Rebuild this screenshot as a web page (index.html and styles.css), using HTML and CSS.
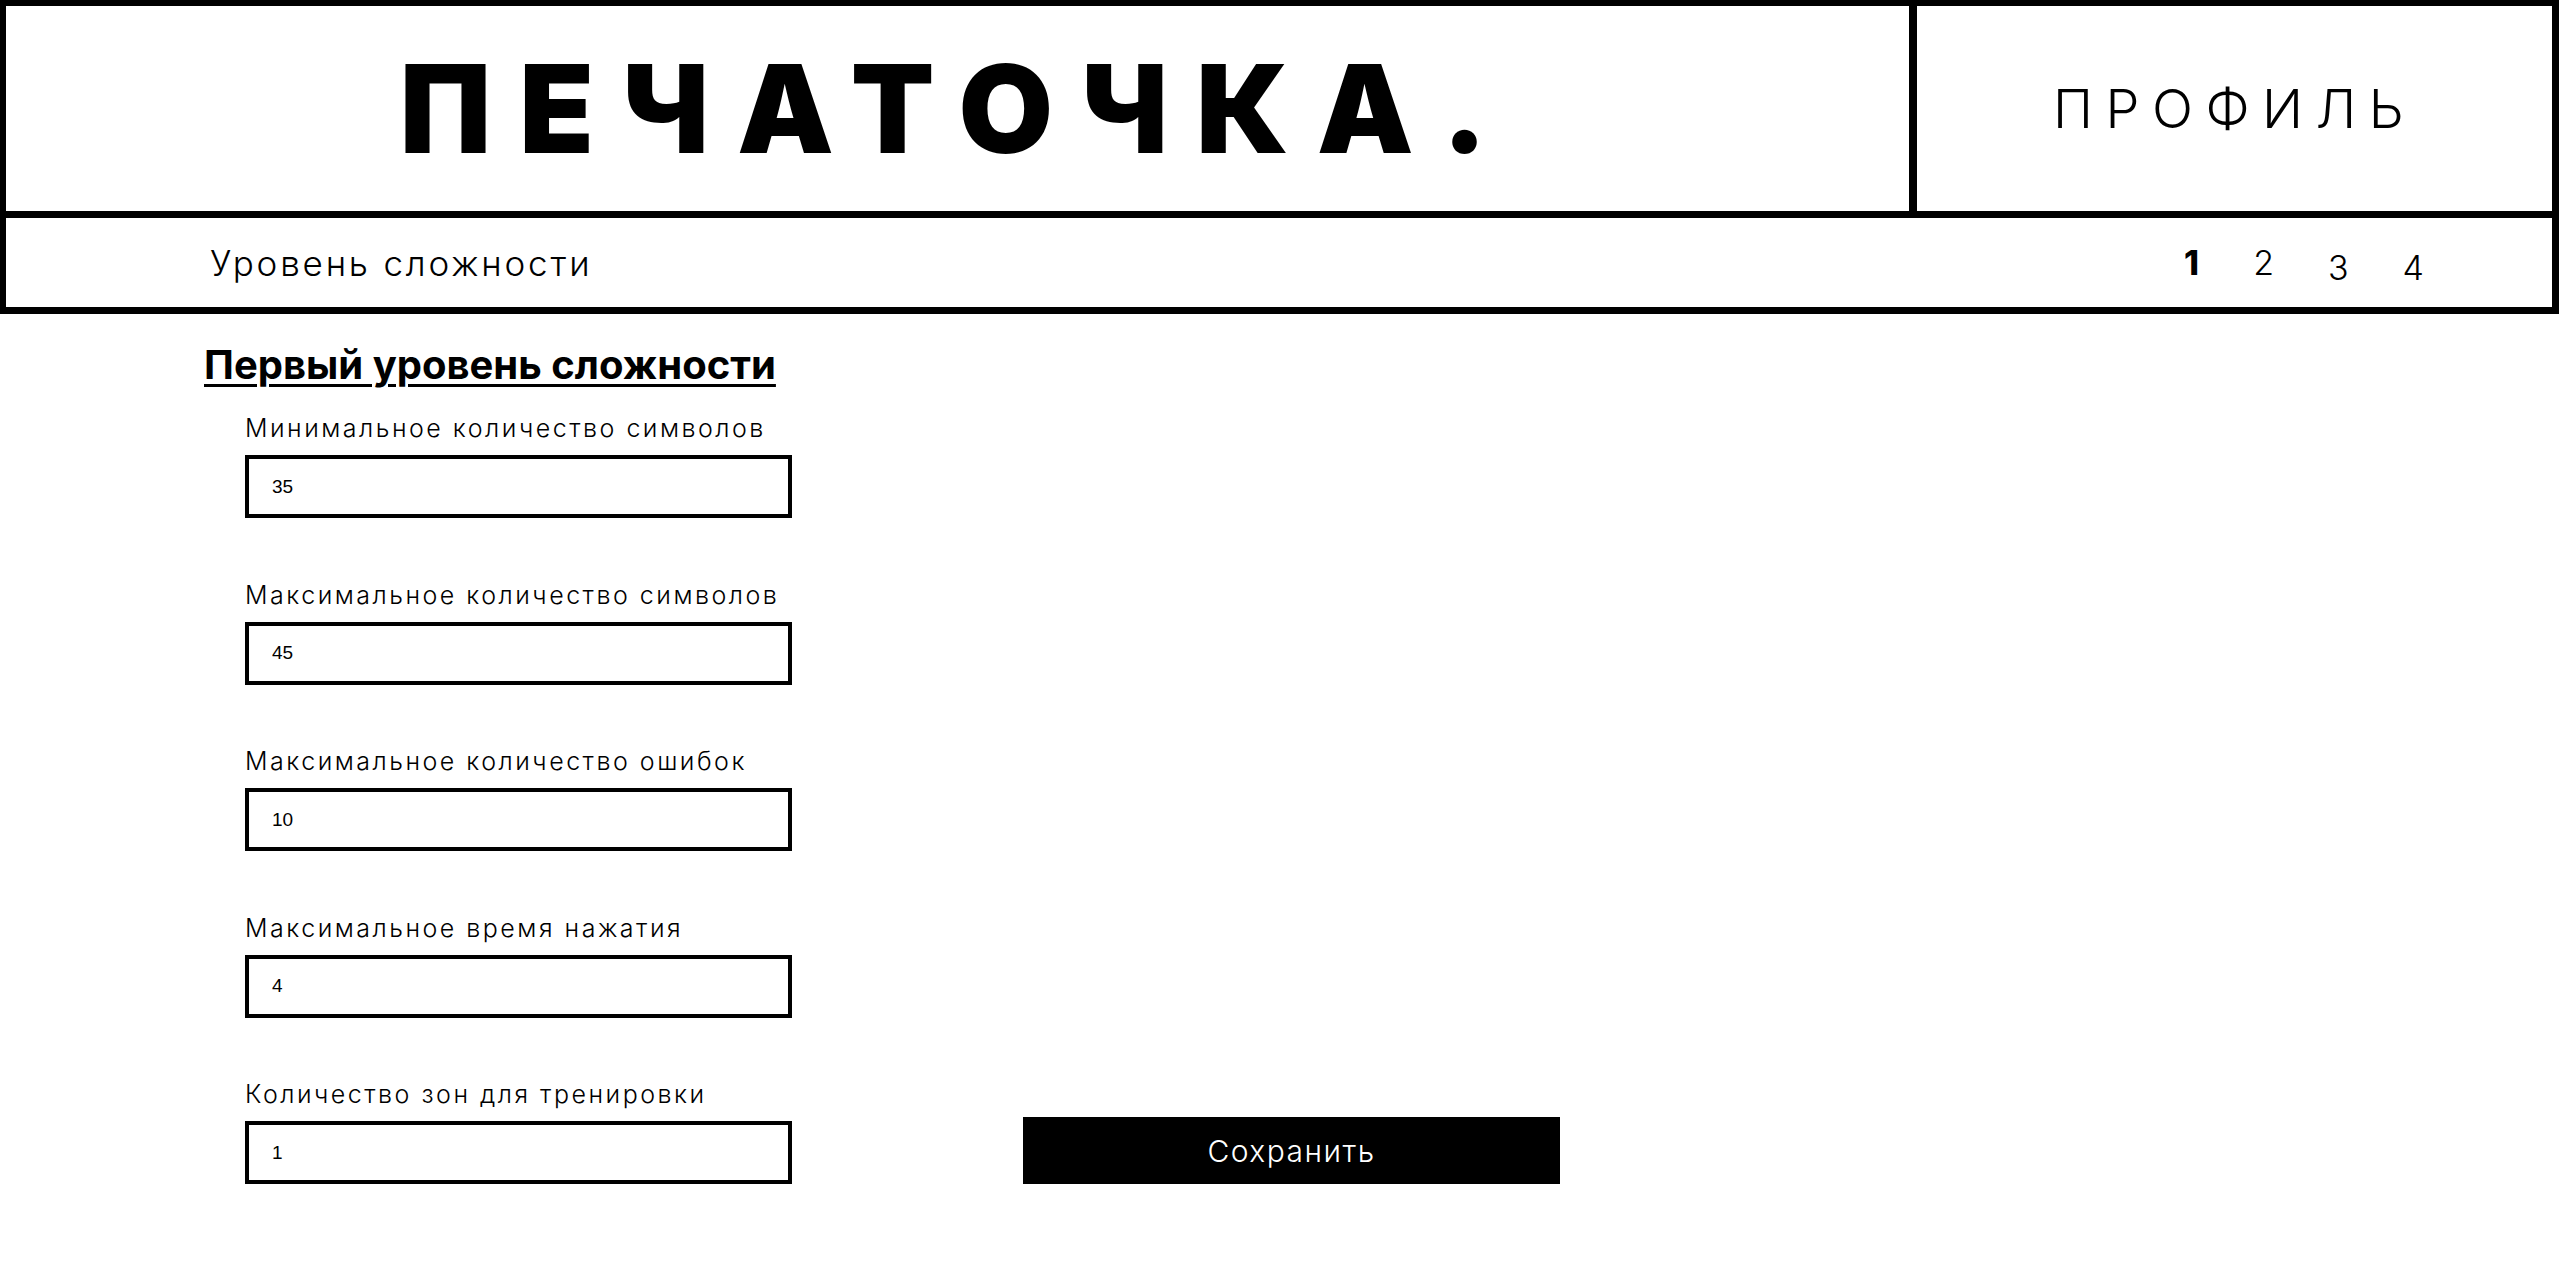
FILE: index.html
```html
<!DOCTYPE html>
<html lang="ru">
<head>
<meta charset="utf-8">
<title>Печаточка — уровень сложности</title>
<link rel="stylesheet" href="styles.css">
</head>
<body>
<header class="header">
  <div class="header-top">
    <div class="logo-cell"><h1 class="logo">ПЕЧАТОЧКА.</h1></div>
    <div class="profile-cell"><a class="profile" href="#">ПРОФИЛЬ</a></div>
  </div>
  <div class="header-bottom">
    <span class="section-title">Уровень сложности</span>
    <nav class="levels">
      <a class="level active" href="#">1</a>
      <a class="level" href="#">2</a>
      <a class="level low" href="#">3</a>
      <a class="level low" href="#">4</a>
    </nav>
  </div>
</header>
<main class="content">
  <h2 class="level-title">Первый уровень сложности</h2>
  <form class="form">
    <div class="field">
      <label class="field-label">Минимальное количество символов</label>
      <input class="field-input" type="text" value="35">
    </div>
    <div class="field">
      <label class="field-label">Максимальное количество символов</label>
      <input class="field-input" type="text" value="45">
    </div>
    <div class="field">
      <label class="field-label">Максимальное количество ошибок</label>
      <input class="field-input" type="text" value="10">
    </div>
    <div class="field">
      <label class="field-label">Максимальное время нажатия</label>
      <input class="field-input" type="text" value="4">
    </div>
    <div class="last-row">
      <div class="field">
        <label class="field-label">Количество зон для тренировки</label>
        <input class="field-input" type="text" value="1">
      </div>
      <button class="save" type="button">Сохранить</button>
    </div>
  </form>
</main>
</body>
</html>
```

FILE: styles.css
```css
* { box-sizing: border-box; }

body {
  margin: 0;
  font-family: Inter, "Open Sans", sans-serif;
  color: #000;
  background: #fff;
}

a { color: inherit; text-decoration: none; }

.header {
  border: 6px solid #000;
  border-right-width: 7px;
  border-bottom-width: 7px;
}

.header-top {
  display: flex;
  height: 212px;
  border-bottom: 7px solid #000;
}

.logo-cell {
  flex: 0 0 1911px;
  border-right: 8px solid #000;
  display: flex;
  align-items: center;
  justify-content: center;
}

.logo {
  margin: 0;
  font-family: Inter, sans-serif;
  font-weight: 900;
  font-size: 122px;
  line-height: 1;
  letter-spacing: 28px;
}

.profile-cell {
  flex: 1;
  display: flex;
  align-items: center;
  justify-content: center;
}

.profile {
  font-weight: 300;
  font-size: 54px;
  letter-spacing: 12.5px;
}

.header-bottom {
  height: 89px;
  display: flex;
  align-items: center;
  justify-content: space-between;
  padding: 0 128px 0 204px;
}

.section-title {
  font-weight: 300;
  font-size: 35px;
  letter-spacing: 2.8px;
}

.levels {
  display: flex;
  gap: 54px;
  font-size: 34px;
  font-weight: 300;
}

.level.active { font-weight: 800; }
.level.low { position: relative; top: 5px; }

.content {
  padding: 26px 0 40px 204px;
}

.level-title {
  margin: 0 0 24px;
  font-size: 40px;
  font-weight: 700;
  text-decoration: underline;
  text-decoration-thickness: 3px;
  text-underline-offset: 5px;
}

.form {
  padding-left: 41px;
  display: flex;
  flex-direction: column;
  gap: 61.5px;
}

.field {
  display: flex;
  flex-direction: column;
  gap: 12px;
}

.field-label {
  font-weight: 300;
  font-size: 25px;
  letter-spacing: 2.5px;
  line-height: 30px;
}

.field-input {
  width: 547px;
  height: 63px;
  border: 4px solid #000;
  padding: 0 0 0 23px;
  font-family: "Liberation Sans", Arial, sans-serif;
  font-size: 19px;
  color: #000;
  outline: none;
}

.last-row {
  display: flex;
  align-items: flex-end;
  gap: 231px;
}

.save {
  width: 537px;
  height: 67px;
  border: 0;
  background: #000;
  color: #fff;
  font-family: Inter, sans-serif;
  font-weight: 300;
  font-size: 30px;
  letter-spacing: 1.5px;
  cursor: pointer;
}
```
